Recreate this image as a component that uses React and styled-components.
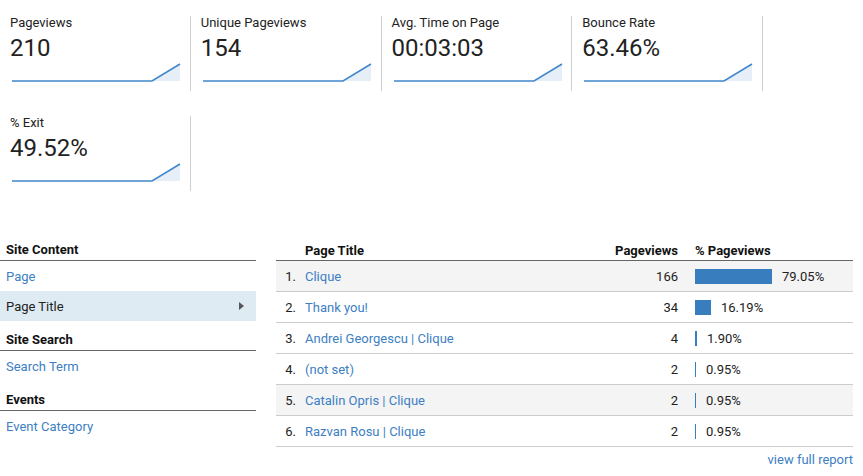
import React from "react";
import styled, { createGlobalStyle } from "styled-components";

const Global = createGlobalStyle`
  html, body { margin: 0; padding: 0; background: #fff; }
  body { font-family: Roboto, "Liberation Sans", Arial, sans-serif; color: #222; }
  * { box-sizing: border-box; }
`;

const Page = styled.div`
  width: 863px;
  padding-top: 16px;
`;

const MetricGrid = styled.div`
  display: grid;
  grid-template-columns: repeat(4, 190.75px);
  row-gap: 25px;
`;

const Tile = styled.div`
  height: 75px;
  padding-left: 10px;
  border-right: 1px solid #cfcfcf;
  display: flex;
  flex-direction: column;
`;

const TileLabel = styled.div`
  font-size: 13px;
  line-height: 13px;
  color: #222;
`;

const TileValue = styled.div`
  font-size: 24px;
  line-height: 28px;
  margin-top: 5px;
  color: #222;
`;

const Spark = styled.svg`
  display: block;
  width: 172px;
  height: 20px;
`;

const Bottom = styled.div`
  display: flex;
  gap: 20px;
  margin-top: 49px;
`;

const Side = styled.div`
  width: 256px;
  display: flex;
  flex-direction: column;
`;

const SideHeader = styled.div`
  font-size: 13px;
  font-weight: 700;
  line-height: 20px;
  height: 21px;
  padding-left: 6px;
  border-bottom: 1px solid #666;
  margin-top: ${(p) => (p.$first ? "0" : "9px")};
  color: #111;
`;

const SideItem = styled.div`
  height: 30px;
  display: flex;
  align-items: center;
  justify-content: space-between;
  padding: 0 12px 0 6px;
  font-size: 13px;
  color: ${(p) => (p.$active ? "#222" : "#3d80c3")};
  background: ${(p) => (p.$active ? "#deebf3" : "transparent")};
`;

const Caret = styled.span`
  width: 0;
  height: 0;
  border-top: 4px solid transparent;
  border-bottom: 4px solid transparent;
  border-left: 5px solid #555;
`;

const TableWrap = styled.div`
  width: 577px;
  display: flex;
  flex-direction: column;
`;

const Row = styled.div`
  display: grid;
  grid-template-columns: 29px 1fr 80px 175px;
  align-items: center;
  height: ${(p) => (p.$head ? "21px" : "31px")};
  border-bottom: 1px solid ${(p) => (p.$head ? "#666" : "#ccc")};
  background: ${(p) => (p.$shade ? "#f4f4f4" : "transparent")};
  font-size: 13px;
  font-weight: ${(p) => (p.$head ? 700 : 400)};
  color: ${(p) => (p.$head ? "#111" : "#222")};
`;

const Num = styled.div`
  text-align: right;
  padding-right: 9px;
`;

const TitleCell = styled.div`
  color: ${(p) => (p.$head ? "#111" : "#3d80c3")};
  white-space: nowrap;
`;

const Count = styled.div`
  text-align: right;
`;

const Pct = styled.div`
  padding-left: 17px;
  display: flex;
  align-items: center;
  gap: 10px;
`;

const Bar = styled.span`
  display: block;
  height: 15px;
  background: #387ebf;
`;

const Footer = styled.div`
  text-align: right;
  font-size: 13px;
  line-height: 20px;
  margin-top: 3px;
  color: #3d80c3;
`;

const metrics = [
  ["Pageviews", "210"],
  ["Unique Pageviews", "154"],
  ["Avg. Time on Page", "00:03:03"],
  ["Bounce Rate", "63.46%"],
  ["% Exit", "49.52%"],
];

const rows = [
  ["Clique", 166, 79.05, true],
  ["Thank you!", 34, 16.19, false],
  ["Andrei Georgescu | Clique", 4, 1.9, false],
  ["(not set)", 2, 0.95, false],
  ["Catalin Opris | Clique", 2, 0.95, true],
  ["Razvan Rosu | Clique", 2, 0.95, false],
];

function Sparkline() {
  return (
    <Spark viewBox="0 0 172 20">
      <polygon points="142,19 170,2 170,19" fill="#e6eef7" />
      <polyline
        points="2,19 142,19 170,2"
        fill="none"
        stroke="#3f86cc"
        strokeWidth="1.5"
      />
    </Spark>
  );
}

export default function App() {
  return (
    <Page>
      <Global />
      <MetricGrid>
        {metrics.map(([label, value]) => (
          <Tile key={label}>
            <TileLabel>{label}</TileLabel>
            <TileValue>{value}</TileValue>
            <Sparkline />
          </Tile>
        ))}
      </MetricGrid>
      <Bottom>
        <Side>
          <SideHeader $first>Site Content</SideHeader>
          <SideItem>Page</SideItem>
          <SideItem $active>
            Page Title
            <Caret />
          </SideItem>
          <SideHeader>Site Search</SideHeader>
          <SideItem>Search Term</SideItem>
          <SideHeader>Events</SideHeader>
          <SideItem>Event Category</SideItem>
        </Side>
        <TableWrap>
          <Row $head>
            <Num />
            <TitleCell $head>Page Title</TitleCell>
            <Count>Pageviews</Count>
            <Pct>% Pageviews</Pct>
          </Row>
          {rows.map(([title, count, pct, shade], i) => (
            <Row key={title} $shade={shade}>
              <Num>{i + 1}.</Num>
              <TitleCell>{title}</TitleCell>
              <Count>{count}</Count>
              <Pct>
                <Bar style={{ width: Math.max(1, Math.round(pct * 0.975)) + "px" }} />
                {pct.toFixed(2)}%
              </Pct>
            </Row>
          ))}
          <Footer>view full report</Footer>
        </TableWrap>
      </Bottom>
    </Page>
  );
}
